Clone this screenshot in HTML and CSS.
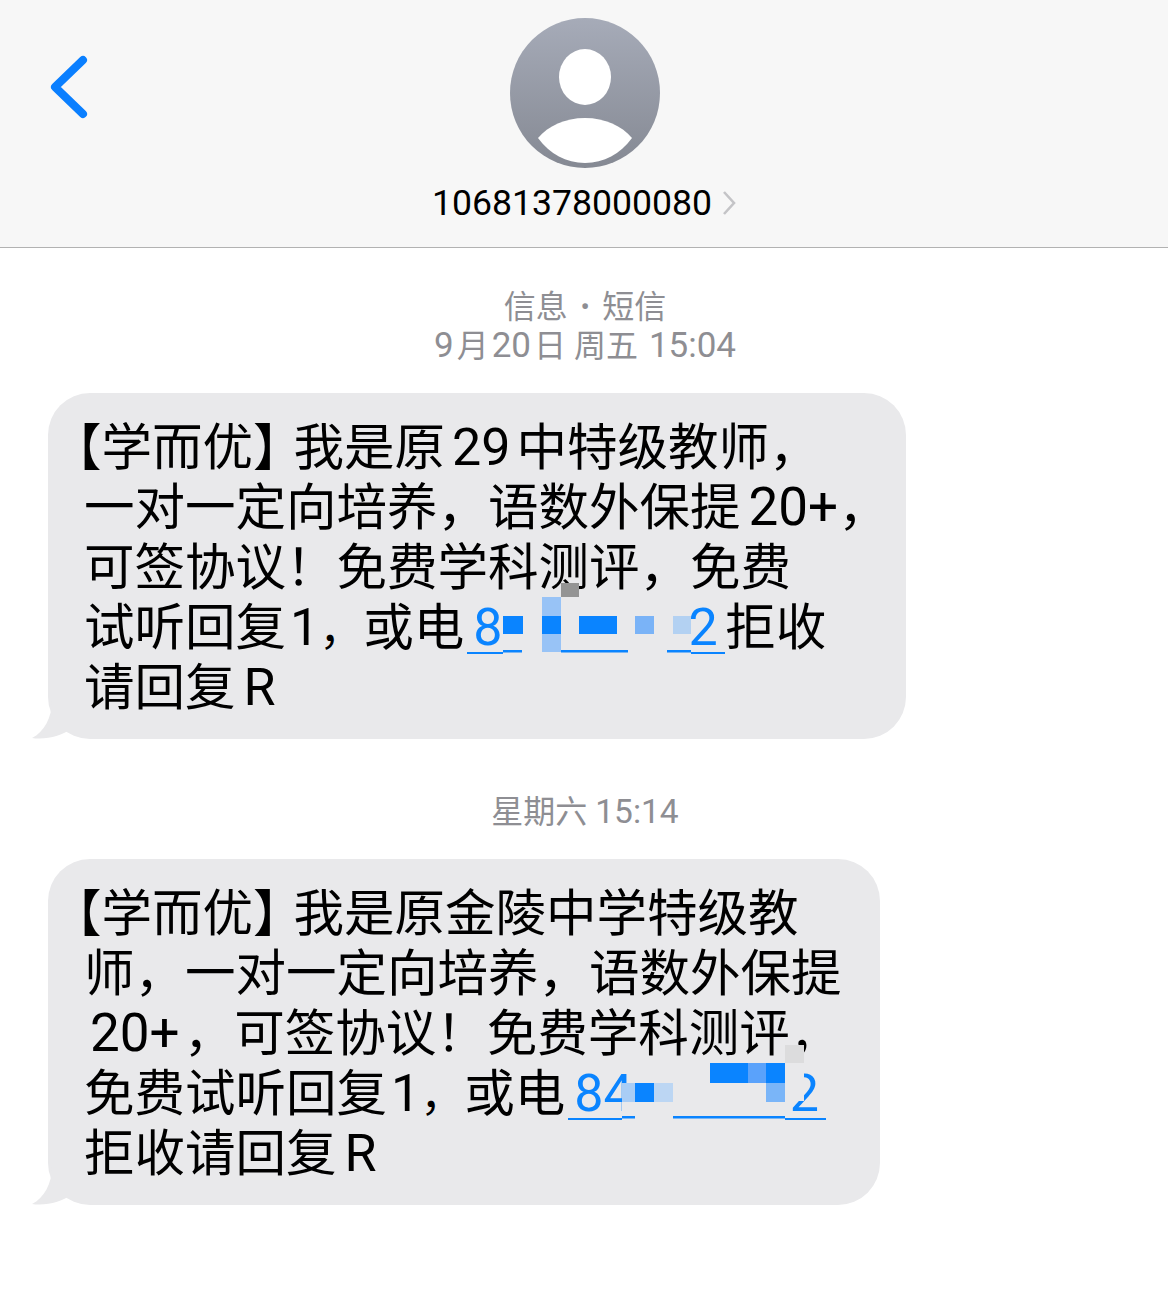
FILE: index.html
```html
<!DOCTYPE html>
<html lang="zh-CN">
<head>
    <meta charset="UTF-8">
    <meta name="viewport" content="width=device-width, initial-scale=1.0">
    <title>信息</title>
    <link rel="stylesheet" href="styles.css">
</head>
<body>
    <header class="top-bar">
        <svg class="back" width="38" height="64" viewBox="0 0 38 64">
            <path d="M33 5 L5 32 L33 59" fill="none" stroke="#0a7fff" stroke-width="8" stroke-linecap="round" stroke-linejoin="round"/>
        </svg>
        <svg class="avatar" width="150" height="150" viewBox="0 0 150 150">
            <defs>
                <linearGradient id="avatar-bg" x1="0" y1="0" x2="0" y2="1">
                    <stop offset="0" stop-color="#a6abb8"/>
                    <stop offset="1" stop-color="#858993"/>
                </linearGradient>
            </defs>
            <circle cx="75" cy="75" r="75" fill="url(#avatar-bg)"/>
            <ellipse cx="75" cy="59" rx="26" ry="28" fill="#fff"/>
            <path d="M28 120 C38 108 55 100 75 100 C95 100 112 108 122 120 C110 136 94 145 75 145 C56 145 40 136 28 120 Z" fill="#fff"/>
        </svg>
        <div class="contact">
            <span>10681378000080</span>
            <svg width="14" height="26" viewBox="0 0 14 26">
                <path d="M2 2 L12 13 L2 24" fill="none" stroke="#c4c4c7" stroke-width="2.6"/>
            </svg>
        </div>
    </header>

    <main class="thread">
        <div class="stamp stamp-first">
            <div>信息 <b class="dot">•</b> 短信</div>
            <div><span class="ts">9</span>月<span class="ts">20</span>日 周五 <span class="ts">15:04</span></div>
        </div>
        <div class="bubble bubble-one">
            <svg class="tail" width="44" height="40" viewBox="0 0 44 40">
                <path d="M20 0 C20 18 12 32 0 38 C14 40 30 36 40 28 L44 0 Z" fill="#e9e9eb"/>
            </svg>
            <span class="br">【学而优】</span>我是原<span class="num num-mid">29</span>中特级教师，<br>
            一对一定向培养，语数外保提<span class="num num-end">20+</span>，<br>
            可签协议！免费学科测评，免费<br>
            试听回复<span class="num num-one">1</span><span class="comma">，</span>或电<a class="phone"><span class="digit">8</span><span class="gap gap-one"></span><span class="digit">2</span><svg class="mask mask-one" width="188" height="72" viewBox="0 0 188 72">
                <rect x="0" y="14" width="188" height="58" fill="#e9e9eb"/>
                <rect x="58" y="0" width="18" height="14" fill="#949494"/>
                <rect x="39" y="14" width="19" height="55" fill="#98c3f6"/>
                <rect x="39" y="33" width="19" height="18" fill="#0a84ff"/>
                <rect x="0" y="33" width="20" height="18" fill="#0a84ff"/>
                <rect x="76" y="33" width="38" height="18" fill="#0a84ff"/>
                <rect x="132" y="33" width="19" height="18" fill="#7ab3f7"/>
                <rect x="170" y="33" width="18" height="18" fill="#b3d1f2"/>
                <rect x="0" y="67" width="19" height="2.5" fill="#0a84ff"/>
                <rect x="58" y="67" width="67" height="2.5" fill="#0a84ff"/>
                <rect x="164" y="67" width="24" height="2.5" fill="#0a84ff"/>
            </svg></a>拒收<br>
            请回复<span class="num">R</span>
        </div>

        <div class="stamp stamp-second">星期六 <span class="ts">15:14</span></div>
        <div class="bubble bubble-two">
            <svg class="tail" width="44" height="40" viewBox="0 0 44 40">
                <path d="M20 0 C20 18 12 32 0 38 C14 40 30 36 40 28 L44 0 Z" fill="#e9e9eb"/>
            </svg>
            <span class="br">【学而优】</span>我是原金陵中学特级教<br>
            师，一对一定向培养，语数外保提<br>
            <span class="num num-start">20+</span>，可签协议！免费学科测评，<br>
            免费试听回复<span class="num num-one">1</span><span class="comma">，</span>或电<a class="phone"><span class="digit">84</span><span class="gap gap-two"></span><span class="digit">2</span><svg class="mask mask-two" width="182" height="76" viewBox="0 0 182 76">
                <rect x="13" y="18" width="150" height="58" fill="#e9e9eb"/>
                <rect x="0" y="38" width="13" height="38" fill="#e9e9eb"/>
                <rect x="163" y="18" width="19" height="38" fill="#e9e9eb"/>
                <rect x="163" y="0" width="19" height="18" fill="#dcdcdd"/>
                <rect x="0" y="38" width="13" height="19" fill="#a9cdf5"/>
                <rect x="13" y="38" width="19" height="19" fill="#0a84ff"/>
                <rect x="32" y="38" width="19" height="19" fill="#bcd6f3"/>
                <rect x="88" y="18" width="38" height="20" fill="#0a84ff"/>
                <rect x="126" y="18" width="18" height="20" fill="#5aa2fb"/>
                <rect x="144" y="18" width="19" height="20" fill="#0a84ff"/>
                <rect x="144" y="38" width="19" height="19" fill="#7ab5f8"/>
                <rect x="0" y="71" width="13" height="2.5" fill="#0a84ff"/>
                <rect x="51" y="71" width="112" height="2.5" fill="#0a84ff"/>
            </svg></a><br>
            拒收请回复<span class="num">R</span>
        </div>
    </main>
</body>
</html>
```

FILE: styles.css
```css
* {
    box-sizing: border-box;
}
body {
    margin: 0;
    background: #fff;
    color: #000;
    font-family: "Roboto", "Noto Sans CJK SC", sans-serif;
}
.top-bar {
    position: relative;
    height: 248px;
    padding-top: 18px;
    display: flex;
    flex-direction: column;
    align-items: center;
    background: #f7f7f7;
    border-bottom: 1px solid #b2b2b2;
}
.back {
    position: absolute;
    left: 50px;
    top: 55px;
}
.avatar {
    display: block;
    margin-left: 2px;
}
.contact {
    margin-top: 14px;
    display: flex;
    align-items: center;
    gap: 10px;
    font-size: 35.6px;
    line-height: 42px;
}
.stamp {
    text-align: center;
    color: #8e8e93;
    font-size: 32px;
    line-height: 39px;
    padding-left: 2px;
}
.stamp > div {
    height: 39px;
}
.stamp-first {
    padding-top: 40px;
}
.stamp-second {
    margin-top: 54px;
    height: 39px;
}
.ts {
    font-size: 35px;
    margin: 0 3px;
    line-height: 1;
}
.stamp-second .ts {
    font-size: 33.5px;
    margin: 0;
}
.dot {
    font-size: 24px;
    margin: 0 5px;
    line-height: 1;
    position: relative;
    top: -3px;
}
.bubble {
    position: relative;
    margin-left: 48px;
    height: 346px;
    padding: 25px 0 21px 36px;
    background: #e9e9eb;
    border-radius: 42px;
    font-size: 50.5px;
    line-height: 60px;
    white-space: nowrap;
}
.bubble-one {
    width: 858px;
    margin-top: 27px;
}
.bubble-two {
    width: 832px;
    margin-top: 27px;
}
.tail {
    position: absolute;
    left: -16px;
    bottom: -1px;
}
.br {
    margin-left: -33px;
    margin-right: -10px;
}
.num {
    margin: 0 8px;
    font-size: 52px;
    line-height: 1;
}
.num-mid {
    margin: 0 6px 0 7px;
}
.num-end {
    font-size: 53px;
    margin-right: 0;
}
.num-one {
    margin: 0 0 0 4px;
}
.comma {
    font-size: 44px;
    line-height: 1;
}
.num-start {
    font-size: 53px;
    margin-left: 6px;
    margin-right: 4px;
}
.phone {
    position: relative;
    display: inline-block;
    width: 258px;
    margin-left: 3px;
    padding-left: 6px;
    height: 51px;
    line-height: 50px;
    font-size: 52px;
    color: #0a84ff;
    border-bottom: 2px solid #0a84ff;
}
.gap {
    display: inline-block;
}
.gap-one {
    width: 186px;
}
.gap-two {
    width: 157px;
}
.mask {
    position: absolute;
    display: block;
}
.mask-one {
    left: 36px;
    top: -20px;
}
.mask-two {
    left: 54px;
    top: -24px;
}
```
